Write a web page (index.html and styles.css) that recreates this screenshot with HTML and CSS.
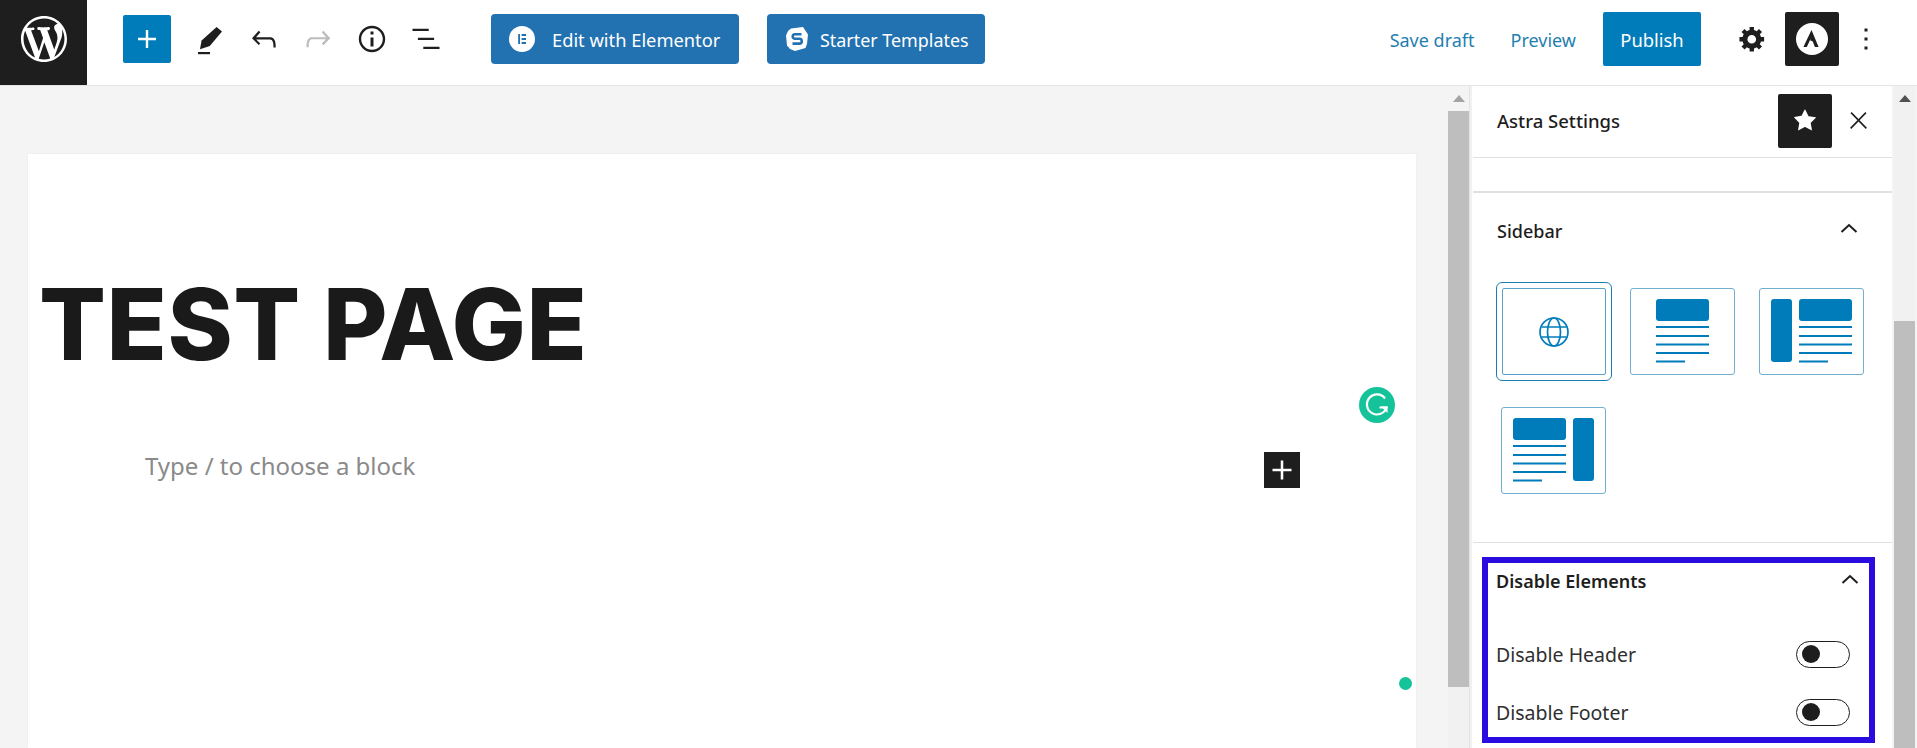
FILE: index.html
```html
<!DOCTYPE html>
<html lang="en">
<head>
<meta charset="utf-8">
<title>Test Page</title>
<link rel="stylesheet" href="styles.css">
</head>
<body>
<header class="topbar">
  <a class="wp-logo"><svg viewBox="0 0 20 20" width="46" height="46"><path fill="#fff" d="M20 10c0-5.51-4.49-10-10-10C4.48 0 0 4.49 0 10c0 5.52 4.48 10 10 10 5.51 0 10-4.48 10-10zM7.78 15.37L4.37 6.22c.55-.02 1.17-.08 1.17-.08.5-.06.44-1.13-.06-1.11 0 0-1.45.11-2.37.11-.18 0-.37 0-.58-.01C4.12 2.69 6.87 1.11 10 1.11c2.33 0 4.45.87 6.05 2.34-.68-.11-1.65.39-1.65 1.58 0 .74.45 1.36.9 2.1.35.61.55 1.36.55 2.46 0 1.49-1.4 5-1.4 5l-3.03-8.37c.54-.02.82-.17.82-.17.5-.05.44-1.25-.06-1.22 0 0-1.44.12-2.38.12-.87 0-2.33-.12-2.33-.12-.5-.03-.56 1.2-.06 1.22l.92.08 1.26 3.41zM17.41 10c.24-.64.74-1.87.43-4.25.7 1.29 1.05 2.71 1.05 4.25 0 3.29-1.73 6.24-4.4 7.78.97-2.59 1.94-5.2 2.92-7.78zM6.1 18.09C3.12 16.65 1.11 13.53 1.11 10c0-1.3.23-2.48.72-3.59C3.25 10.3 4.67 14.2 6.1 18.09zm4.03-6.63l2.58 6.98c-.86.29-1.76.45-2.71.45-.79 0-1.57-.11-2.29-.33.81-2.38 1.62-4.74 2.42-7.1z"/></svg></a>
  <div class="tools">
    <button class="inserter"><svg viewBox="0 0 24 24" width="36" height="36"><path fill="#fff" d="M18 11.2h-5.2V6h-1.6v5.2H6v1.6h5.2V18h1.6v-5.2H18z"/></svg></button>
    <div class="icon-row">
      <span class="tool"><svg viewBox="0 0 36 36" width="36" height="36"><path fill="#1e1e1e" d="M24.6 6 30 10.6 17.8 25 8 28.2 9.6 19.4z"/><rect fill="#1e1e1e" x="6" y="31" width="12" height="2.2"/></svg></span>
      <span class="tool"><svg viewBox="0 0 24 24" width="36" height="36"><path fill="#1e1e1e" d="M18.3 11.7c-.6-.6-1.4-.9-2.3-.9H6.7l2.9-3.3-1.1-1-4.5 5L8.5 16l1-1-2.7-2.7H16c.5 0 .9.2 1.3.5 1 1 1 3.4 1 4.5v.3h1.5v-.2c0-1.5 0-4.3-1.5-5.7z"/></svg></span>
      <span class="tool"><svg viewBox="0 0 24 24" width="36" height="36"><path fill="#bdbdbd" d="M15.6 6.5l-1.1 1 2.9 3.3H8c-.9 0-1.7.3-2.3.9-1.4 1.5-1.4 4.2-1.4 5.6v.2h1.5v-.3c0-1.1 0-3.5 1-4.5.3-.3.7-.5 1.3-.5h9.2L14.5 15l1.1 1.1 4.6-4.6-4.6-5z"/></svg></span>
      <span class="tool"><svg viewBox="0 0 24 24" width="36" height="36"><path fill="#1e1e1e" d="M12 3.2c-4.8 0-8.8 3.9-8.8 8.8 0 4.8 3.9 8.8 8.8 8.8 4.8 0 8.8-3.9 8.8-8.8 0-4.8-4-8.8-8.8-8.8zm0 16c-4 0-7.2-3.3-7.2-7.2C4.8 8 8 4.8 12 4.8s7.2 3.3 7.2 7.2c0 4-3.2 7.2-7.2 7.2zM11 17h2v-6h-2v6zm0-8h2V7h-2v2z"/></svg></span>
      <span class="tool"><svg viewBox="0 0 24 24" width="36" height="36"><path fill="#1e1e1e" d="M13.8 5.2H3v1.5h10.8V5.2zm-3.6 12v1.5H21v-1.5H10.2zm7.2-6H6.6v1.5h10.8v-1.5z"/></svg></span>
    </div>
    <button class="builder builder-elementor"><svg class="builder-icon" viewBox="0 0 26 26" width="26" height="26"><circle cx="13" cy="13" r="13" fill="#fff"/><path fill="#2271b1" d="M9.2 8h1.8v10H9.2zM12.6 8h4.400v1.900h-4.400zM12.600 12h4.400v1.900h-4.400zM12.600 16.100h4.400V18h-4.400z"/></svg><span class="builder-text">Edit with Elementor</span></button>
    <button class="builder builder-starter"><svg class="builder-icon" viewBox="0 0 26 26" width="26" height="26"><path fill="#fff" d="M7 2.500 19 1l3 4.500 2 3-1 9.500-1.500 4L11 25l-5-2-3-3.500L2 9.500 4 5z"/><path fill="none" stroke="#2271b1" stroke-width="2.600" d="M17.500 8.200H11a2.300 2.300 0 0 0 0 4.600h4.400a2.400 2.400 0 0 1 0 4.800H8.500"/></svg><span class="builder-text">Starter Templates</span></button>
  </div>
  <div class="actions">
    <a class="link">Save draft</a>
    <a class="link link-preview">Preview</a>
    <button class="publish">Publish</button>
    <span class="gear"><svg viewBox="0 0 20 20" width="29" height="29"><path fill="#1e1e1e" d="M18 12h-2.180c-.17.7-.44 1.350-.81 1.930l1.540 1.540-2.100 2.100-1.540-1.540c-.58.36-1.230.63-1.910.79V19H8v-2.180c-.68-.16-1.330-.43-1.910-.79l-1.540 1.540-2.120-2.120 1.540-1.540c-.36-.58-.63-1.230-.79-1.910H1V9.030h2.170c.16-.7.44-1.350.8-1.940L2.430 5.550l2.100-2.100 1.540 1.540c.58-.37 1.240-.64 1.930-.81V2h3v2.180c.68.16 1.330.43 1.910.79l1.540-1.540 2.120 2.120-1.540 1.540c.36.59.64 1.240.8 1.940H18V12zm-8.500 1.500c1.660 0 3-1.340 3-3s-1.340-3-3-3-3 1.340-3 3 1.340 3 3 3z"/></svg></span>
    <span class="astra-btn"><svg viewBox="0 0 32 32" width="32" height="32"><circle cx="16" cy="16" r="16" fill="#fff"/><path fill="#1e1e1e" d="M15.500 7 22.600 24h-3.700l-2.100-5.400-2.700-1.400 1.700-4L10.800 24H7.400z"/></svg></span>
    <span class="more"><svg viewBox="0 0 24 24" width="36" height="36"><path fill="#1e1e1e" d="M13 19h-2v-2h2v2zm0-6h-2v-2h2v2zm0-6h-2V5h2v2z"/></svg></span>
  </div>
</header>
<main class="layout">
  <section class="editor">
    <article class="page">
      <h1 class="page-title">TEST PAGE</h1>
      <div class="block-row">
        <span class="placeholder">Type / to choose a block</span>
        <button class="block-add"><svg viewBox="0 0 24 24" width="38" height="38"><path fill="#fff" d="M18 11.200h-5.200V6h-1.600v5.200H6v1.600h5.200V18h1.600v-5.200H18z"/></svg></button>
      </div>
      <span class="grammarly"><svg viewBox="0 0 36 36" width="36" height="36"><circle cx="18" cy="18" r="18" fill="#15c39a"/><path fill="none" stroke="#fff" stroke-width="2.200" d="M26 11.500A10 10 0 1 0 27.500 20.500H20.500"/><path fill="#fff" d="M22 19.500h6.500V26z"/></svg></span>
      <span class="grammarly-dot"></span>
    </article>
  </section>
  <div class="scrollbar scrollbar-editor"><span class="arrow arrow-light"></span><span class="thumb thumb-editor"></span></div>
  <aside class="sidebar">
    <div class="side-head">
      <h2 class="side-title">Astra Settings</h2>
      <span class="star-btn"><svg viewBox="0 0 24 24" width="36" height="36"><path fill="#fff" d="M11.776 4.454a.25.25 0 01.448 0l2.069 4.192a.25.25 0 00.188.137l4.626.672a.25.25 0 01.139.426l-3.348 3.263a.25.25 0 00-.072.222l.79 4.607a.25.25 0 01-.362.263l-4.138-2.175a.25.25 0 00-.232 0l-4.138 2.175a.25.25 0 01-.363-.263l.79-4.607a.25.25 0 00-.071-.222L4.754 9.680a.25.25 0 01.139-.426l4.626-.672a.25.25 0 00.188-.137l2.069-4.192z"/></svg></span>
      <span class="close"><svg viewBox="0 0 24 24" width="27" height="27"><path fill="#1e1e1e" d="M13 11.800l6.100-6.300-1-1-6.100 6.200-6.100-6.200-1 1 6.100 6.300-6.500 6.700 1 1 6.500-6.600 6.500 6.600 1-1z"/></svg></span>
    </div>
    <div class="side-blank"></div>
    <section class="side-section">
      <div class="section-head">
        <h3 class="section-title">Sidebar</h3>
        <svg class="chevron" viewBox="0 0 18 10" width="18" height="10"><path fill="none" stroke="#1e1e1e" stroke-width="2" d="M1.500 9 9 2l7.500 7"/></svg>
      </div>
      <div class="options">
        <span class="option option-selected">
          <span class="option-inner"><svg viewBox="0 0 30 30" width="30" height="30" fill="none" stroke="#007cba" stroke-width="1.700"><circle cx="15" cy="15" r="14"/><ellipse cx="15" cy="15" rx="6.500" ry="14"/><path d="M2.500 10h25M2.500 20h25"/></svg></span>
        </span>
        <span class="option">
          <svg viewBox="0 0 105 87" width="105" height="87"><rect x="26" y="11" width="53" height="22" rx="3" fill="#007cba"/><path stroke="#007cba" stroke-width="2" d="M26 39h53M26 48h53M26 56.500h53M26 65h53M26 73.500h29"/></svg>
        </span>
        <span class="option option-third">
          <svg viewBox="0 0 105 87" width="105" height="87"><rect x="12" y="11" width="21" height="63" rx="3" fill="#007cba"/><rect x="40" y="11" width="53" height="22" rx="3" fill="#007cba"/><path stroke="#007cba" stroke-width="2" d="M40 39h53M40 48h53M40 56.500h53M40 65h53M40 73.500h29"/></svg>
        </span>
        <span class="option option-last">
          <svg viewBox="0 0 105 87" width="105" height="87"><rect x="12" y="11" width="53" height="22" rx="3" fill="#007cba"/><rect x="72" y="11" width="21" height="63" rx="3" fill="#007cba"/><path stroke="#007cba" stroke-width="2" d="M12 39h53M12 48h53M12 56.500h53M12 65h53M12 73.500h29"/></svg>
        </span>
      </div>
    </section>
    <section class="disable-box">
      <div class="disable-head">
        <h3 class="disable-title">Disable Elements</h3>
        <svg class="chevron" viewBox="0 0 18 10" width="18" height="10"><path fill="none" stroke="#1e1e1e" stroke-width="2" d="M1.500 9 9 2l7.500 7"/></svg>
      </div>
      <div class="toggle-row"><span class="toggle-label">Disable Header</span><span class="toggle"><span class="knob"></span></span></div>
      <div class="toggle-row"><span class="toggle-label">Disable Footer</span><span class="toggle"><span class="knob"></span></span></div>
    </section>
  </aside>
  <div class="scrollbar scrollbar-side"><span class="arrow"></span><span class="thumb thumb-side"></span></div>
</main>
</body>
</html>
```
FILE: styles.css
```css
* { box-sizing: border-box; }
html, body { margin: 0; height: 748px; overflow: hidden; }
body { font-family: "Noto Sans", "Open Sans", sans-serif; color: #1e1e1e; background: #f4f4f4; }
button { font-family: inherit; border: 0; padding: 0; cursor: pointer; }
h1, h2, h3 { margin: 0; }

.topbar { display: flex; align-items: center; height: 86px; padding-bottom: 8px; background: #fff; border-bottom: 1px solid #e2e4e7; }
.wp-logo { display: flex; align-items: center; justify-content: center; width: 87px; height: 86px; margin-bottom: -8px; margin-top: -1px; padding-bottom: 6px; background: #1e1e1e; }
.tools { display: flex; align-items: center; margin-left: 36px; }
.inserter { display: flex; align-items: center; justify-content: center; width: 48px; height: 48px; background: #007cba; border-radius: 2px; }
.icon-row { display: flex; margin-left: 12px; }
.tool { display: flex; align-items: center; justify-content: center; width: 54px; height: 48px; }
.builder { display: flex; align-items: center; height: 50px; background: #2271b1; color: #fff; border-radius: 4px; font-size: 18.300px; }
.builder-text { padding-top: 2px; }
.builder-elementor { width: 248px; margin-left: 38px; padding-left: 18px; }
.builder-elementor .builder-icon { margin-right: 17px; }
.builder-starter { width: 218px; margin-left: 28px; padding-left: 17px; font-size: 17.900px; }
.builder-starter .builder-icon { margin-right: 10px; }

.actions { display: flex; align-items: center; margin-left: auto; padding-right: 33px; }
.link { padding-top: 2px; color: #1f7fae; font-size: 18px; }
.link-preview { margin-left: 36px; }
.publish { width: 98px; height: 54px; margin-left: 27px; padding-top: 2px; background: #007cba; color: #fff; font-size: 18.400px; border-radius: 2px; }
.gear { display: flex; margin-left: 37px; }
.astra-btn { display: flex; align-items: center; justify-content: center; width: 54px; height: 54px; margin-left: 18px; background: #1e1e1e; border-radius: 2px; }
.more { display: flex; margin-left: 9px; }

.layout { display: flex; height: 662px; overflow: hidden; }
.editor { width: 1448px; padding: 68px 32px 0 28px; }
.page { position: relative; height: 100%; background: #fff; box-shadow: 0 0 2px rgba(0, 0, 0, .05); }
.page-title { padding: 115px 0 0 11px; font-family: Inter, sans-serif; font-weight: 800; font-size: 99px; line-height: 111px; letter-spacing: .5px; color: #1a1a1a; }
.block-row { display: flex; align-items: center; justify-content: space-between; width: 1272px; margin-top: 69px; padding-left: 117px; }
.placeholder { margin-bottom: 9px; font-size: 24px; color: #8a8a8a; }
.block-add { display: flex; align-items: center; justify-content: center; width: 36px; height: 36px; background: #1e1e1e; }
.block-add svg { flex: none; }
.grammarly { position: absolute; left: 1331px; top: 233px; display: flex; }
.grammarly-dot { position: absolute; left: 1371px; top: 523px; width: 13px; height: 13px; border-radius: 50%; background: #15c39a; }

.scrollbar { display: flex; flex-direction: column; align-items: center; flex: none; width: 21px; background: #f1f1f1; }
.scrollbar-editor { background: linear-gradient(#f4f4f4 25px, #f1f1f1 25px); }
.arrow { width: 0; height: 0; margin-top: 9px; border: 6px solid transparent; border-top: 0; border-bottom: 7px solid #505050; }
.arrow-light { border-bottom-color: #a3a3a3; }
.thumb { width: 100%; background: #bebebe; }
.thumb-editor { height: 576px; margin-top: 9px; }
.thumb-side { height: 427px; margin-top: 219px; }
.scrollbar-side { margin-left: 2px; }

.sidebar { width: 423px; height: 662px; padding-left: 3px; flex: none; border-left: 1px solid #e2e4e7; background: linear-gradient(90deg, #f1f1f1 2px, #fff 2px); }
.side-head { display: flex; align-items: center; height: 72px; padding: 0 0 2px 24px; border-bottom: 1px solid #e0e0e0; }
.side-title { font-size: 18.500px; font-weight: 500; }
.star-btn { display: flex; align-items: center; justify-content: center; width: 54px; height: 54px; margin-left: auto; background: #1e1e1e; border-radius: 2px; }
.close { display: flex; margin: 0 20px 0 13px; }
.side-blank { height: 35px; border-bottom: 2px solid #e0e0e0; }
.side-section { height: 350px; padding: 0 20px 0 23px; border-bottom: 1px solid #e0e0e0; }
.section-head { display: flex; align-items: center; justify-content: space-between; height: 76px; padding-left: 1px; padding-right: 9px; }
.section-title { font-size: 18px; font-weight: 500; }
.chevron { margin-right: 5px; margin-bottom: 6px; }
.options { display: flex; flex-wrap: wrap; align-items: center; row-gap: 26px; padding-top: 13px; }
.option { display: flex; width: 105px; height: 87px; border: 1px solid #72aed0; border-radius: 3px; background: #fff; }
.option svg { flex: none; margin: -1px; }
.option-selected { align-items: center; justify-content: center; width: 116px; height: 99px; margin-right: 18px; border: 1.500px solid #1a7fb0; border-radius: 6px; padding: 5px; }
.option-inner { display: flex; align-items: center; justify-content: center; width: 100%; height: 100%; border: 1px solid #5aa2c8; border-radius: 2px; }
.option-selected .option-inner svg { margin: 0; }
.option-third { margin-left: 24px; }
.option-last { margin-left: 5px; }

.disable-box { width: 393px; height: 186px; margin: 14px 0 0 9px; padding: 0 10px 0 8px; border: 6px solid #2a0be0; }
.disable-head { display: flex; align-items: center; justify-content: space-between; height: 36px; }
.disable-title { font-size: 18px; font-weight: 600; }
.disable-head .chevron { margin-right: 0; margin-bottom: 4px; }
.toggle-row { display: flex; align-items: center; justify-content: space-between; height: 58px; font-size: 19.500px; color: #2f2f2f; }
.disable-head + .toggle-row { margin-top: 26px; }
.toggle { display: flex; align-items: center; width: 54px; height: 27px; margin-right: 9px; padding-left: 5px; border: 1px solid #1e1e1e; border-radius: 14px; background: #fff; }
.knob { width: 18px; height: 18px; border-radius: 50%; background: #1e1e1e; }
```
